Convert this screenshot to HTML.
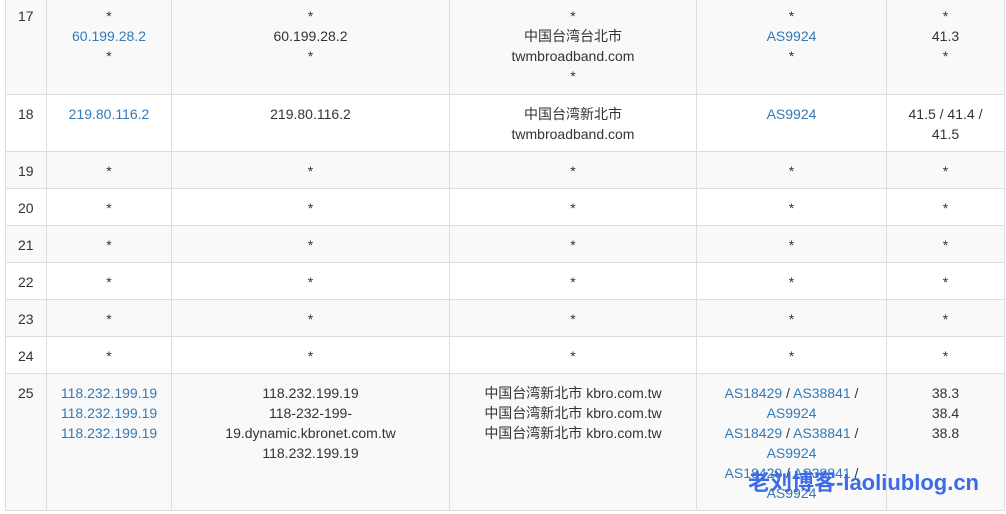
<!DOCTYPE html>
<html><head><meta charset="utf-8"><style>
body{margin:0;width:1006px;height:514px;overflow:hidden;background:#fff;position:relative;font-family:"Liberation Sans","Noto Sans CJK SC",sans-serif;font-size:14px;color:#333}
table{position:absolute;left:5px;top:-4px;border-collapse:collapse;table-layout:fixed;width:999px}
td{border:1px solid #ddd;padding:9px 8px 7px;line-height:20px;text-align:center;vertical-align:top;overflow:visible;white-space:nowrap}
td:first-child{text-align:left;padding-left:12px}
tr:nth-child(odd) td{background:#f9f9f9}
a{color:#337ab7;text-decoration:none}
.wm{position:absolute;left:748px;top:465px;font-size:22px;font-weight:bold;color:#3d6ae6;letter-spacing:0;font-family:"Liberation Sans","Noto Sans CJK SC",sans-serif}
</style></head><body>
<table>
<colgroup><col style="width:41px"><col style="width:125px"><col style="width:278px"><col style="width:247px"><col style="width:190px"><col style="width:118px"></colgroup>
<tr style="height:98px"><td>17</td><td>*<br><a>60.199.28.2</a><br>*</td><td>*<br>60.199.28.2<br>*</td><td>*<br>中国台湾台北市<br>twmbroadband.com<br>*</td><td>*<br><a>AS9924</a><br>*</td><td>*<br>41.3<br>*</td></tr>
<tr style="height:57px"><td>18</td><td><a>219.80.116.2</a></td><td>219.80.116.2</td><td>中国台湾新北市<br>twmbroadband.com</td><td><a>AS9924</a></td><td>41.5 / 41.4 /<br>41.5</td></tr>
<tr style="height:37px"><td>19</td><td>*</td><td>*</td><td>*</td><td>*</td><td>*</td></tr>
<tr style="height:37px"><td>20</td><td>*</td><td>*</td><td>*</td><td>*</td><td>*</td></tr>
<tr style="height:37px"><td>21</td><td>*</td><td>*</td><td>*</td><td>*</td><td>*</td></tr>
<tr style="height:37px"><td>22</td><td>*</td><td>*</td><td>*</td><td>*</td><td>*</td></tr>
<tr style="height:37px"><td>23</td><td>*</td><td>*</td><td>*</td><td>*</td><td>*</td></tr>
<tr style="height:37px"><td>24</td><td>*</td><td>*</td><td>*</td><td>*</td><td>*</td></tr>
<tr style="height:137px"><td>25</td><td><a>118.232.199.19</a><br><a>118.232.199.19</a><br><a>118.232.199.19</a></td><td>118.232.199.19<br>118-232-199-<br>19.dynamic.kbronet.com.tw<br>118.232.199.19</td><td>中国台湾新北市 kbro.com.tw<br>中国台湾新北市 kbro.com.tw<br>中国台湾新北市 kbro.com.tw</td><td><a>AS18429</a> / <a>AS38841</a> /<br><a>AS9924</a><br><a>AS18429</a> / <a>AS38841</a> /<br><a>AS9924</a><br><a>AS18429</a> / <a>AS38841</a> /<br><a>AS9924</a></td><td>38.3<br>38.4<br>38.8</td></tr>
</table>
<div class="wm">老刘博客-laoliublog.cn</div>
</body></html>
